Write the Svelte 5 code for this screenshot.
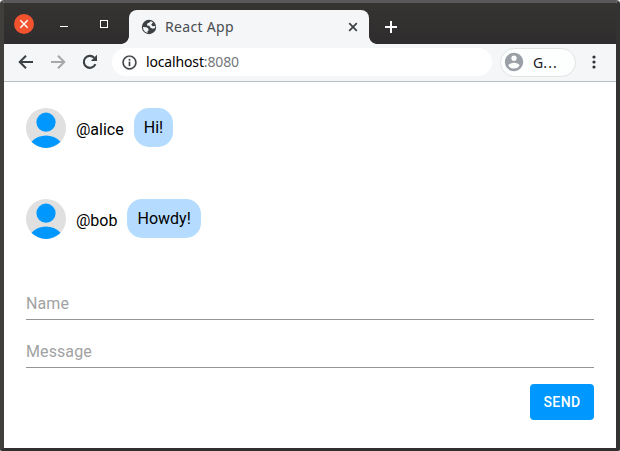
<script>
  const messages = [
    { name: '@alice', text: 'Hi!' },
    { name: '@bob', text: 'Howdy!' }
  ];
  let name = $state('');
  let message = $state('');
</script>

<div class="window">
  <div class="tabstrip">
    <button class="close" aria-label="Close window">
      <svg width="20" height="20" viewBox="0 0 20 20"><path d="M6.3 6.3l7.4 7.4M13.7 6.3l-7.4 7.4" stroke="#fff" stroke-width="1.4" /></svg>
    </button>
    <span class="minimize"></span>
    <span class="maximize"></span>
    <div class="tab">
      <svg class="globe" width="18" height="18" viewBox="0 0 18 18"><circle cx="9" cy="9" r="7.2" fill="#3c4043" /><path d="M10.9 3.2L8.900 4.700 7.300 5.500 6.900 7.500 9.300 7.700 10.500 9.800 12.800 10.700 15 9.900 15.400 7.900 12.600 8.200 11.200 6.700 12.300 5.300 13 4.200zM3 9L6.500 9.300 8.500 10.800 8.400 12.700 7.300 13.400 7.700 15 5 13.700 3.300 11.500z" fill="#f4f6f8" /></svg>
      <span class="title">React App</span>
      <svg class="tabclose" width="10" height="10" viewBox="0 0 10 10"><path d="M1.2 1.2l7.6 7.6M8.8 1.2L1.2 8.8" stroke="#3c4043" stroke-width="1.7" /></svg>
    </div>
    <svg class="plus" width="14" height="14" viewBox="0 0 14 14"><path d="M7 1v12M1 7h12" stroke="#fff" stroke-width="2" /></svg>
  </div>

  <div class="toolbar">
    <svg width="20" height="20" viewBox="0 0 20 20" fill="none" stroke="#3c4043" stroke-width="2"><path d="M17 10H4.500M10 3.700L3.700 10l6.300 6.300" /></svg>
    <svg width="20" height="20" viewBox="0 0 20 20" fill="none" stroke="#a6a7a8" stroke-width="2"><path d="M3 10h12.500M10 3.700l6.300 6.300-6.300 6.300" /></svg>
    <svg width="20" height="20" viewBox="0 0 20 20"><path d="M15.400 12.200A6 6 0 1 1 14.200 5.700" fill="none" stroke="#3c4043" stroke-width="2.100" /><path d="M17 2.800v6.200h-6.200z" fill="#3c4043" /></svg>
    <div class="address">
      <svg width="17" height="17" viewBox="0 0 24 24" fill="#3c4043"><path d="M11 17h2v-6h-2v6zm1-15C6.480 2 2 6.480 2 12s4.480 10 10 10 10-4.480 10-10S17.520 2 12 2zm0 18c-4.410 0-8-3.590-8-8s3.590-8 8-8 8 3.590 8 8-3.590 8-8 8zM11 9h2V7h-2v2z" stroke="#3c4043" stroke-width=".3" /></svg>
      <span class="url">localhost<span class="port">:8080</span></span>
    </div>
    <div class="profile">
      <svg width="22" height="22" viewBox="0 0 24 24" fill="#9aa0a6"><path d="M12 2C6.480 2 2 6.480 2 12s4.480 10 10 10 10-4.480 10-10S17.520 2 12 2zm0 3c1.660 0 3 1.340 3 3s-1.340 3-3 3-3-1.340-3-3 1.340-3 3-3zm0 14.200a7.200 7.200 0 0 1-6-3.220c.03-1.990 4-3.080 6-3.080 1.990 0 5.970 1.090 6 3.080a7.200 7.200 0 0 1-6 3.220z" /></svg>
      <span class="label">G<span class="dots">...</span></span>
    </div>
    <svg class="menu" width="4" height="14" viewBox="0 0 4 14" fill="#303336"><circle cx="2" cy="2" r="1.600" /><circle cx="2" cy="7" r="1.600" /><circle cx="2" cy="12" r="1.600" /></svg>
  </div>

  <main>
    {#each messages as item}
      <div class="row">
        <svg class="avatar" width="40" height="40" viewBox="0 0 40 40"><circle cx="20" cy="20" r="20" fill="#e0e0e0" /><circle cx="20" cy="14.200" r="9.600" fill="#0098ff" /><path d="M5.500 33.700A20 20 0 0 1 34.500 33.700A20 20 0 0 1 5.500 33.700z" transform="translate(0 0)" fill="#0098ff" /></svg>
        <span class="author">{item.name}</span>
        <span class="bubble">{item.text}</span>
      </div>
    {/each}
    <form onsubmit={(e) => e.preventDefault()}>
      <input placeholder="Name" bind:value={name} />
      <input placeholder="Message" bind:value={message} />
      <button class="send">SEND</button>
    </form>
  </main>
</div>

<style>
  :global(body) { margin: 0; background: #fff; }
  .window {
    box-sizing: border-box; width: 620px; height: 451px; overflow: hidden;
    border-style: solid; border-width: 3px 4px 3px 4px;
    border-color: #5a5959 #343333 #302e2f #413f3c;
    border-radius: 4px 4px 2px 2px; background: #fff;
    display: flex; flex-direction: column;
  }
  svg { display: block; flex: none; }
  .tabstrip {
    height: 41px; flex: none; display: flex; align-items: center;
    background: linear-gradient(#363431, #2f2c2e);
    font-family: "Noto Sans", sans-serif;
  }
  .close {
    width: 20px; height: 20px; padding: 0; border: 0; border-radius: 50%;
    background: #f2532f; margin-left: 10px; flex: none;
  }
  .minimize { width: 8px; height: 1px; background: #fff; margin: 5px 0 0 26px; }
  .maximize { box-sizing: border-box; width: 8px; height: 8px; border: 1px solid #fff; margin-left: 32px; }
  .tab {
    position: relative; box-sizing: border-box; width: 240px; height: 34px; margin-left: 21px; align-self: flex-end;
    display: flex; align-items: center; padding: 0 11px;
    background: #f4f6f8; border-radius: 8px 8px 0 0;
  }
  .tab::before, .tab::after { content: ""; position: absolute; bottom: 0; width: 8px; height: 8px; }
  .tab::before { left: -8px; background: radial-gradient(circle at 0 0, transparent 7.5px, #f4f6f8 8.2px); }
  .tab::after { right: -8px; background: radial-gradient(circle at 100% 0, transparent 7.5px, #f4f6f8 8.2px); }
  .title { font-size: 14px; line-height: 20px; margin-left: 7px; color: #494c50; letter-spacing: .32px; }
  .tabclose { margin-left: auto; }
  .plus { margin: 7px 0 0 15px; }
  .toolbar {
    box-sizing: border-box; height: 38px; flex: none; display: flex; align-items: center;
    padding: 0 0 1px 12px; background: #f4f6f8; border-bottom: 1px solid #b7bec5;
    font-family: "Noto Sans", sans-serif;
  }
  .toolbar > svg + svg { margin-left: 12px; }
  .address {
    box-sizing: border-box; width: 380px; height: 28px; margin-left: 12px; padding-left: 9px;
    border-radius: 14px; background: #fff; display: flex; align-items: center;
  }
  .url { margin-left: 8px; font-size: 14px; line-height: 20px; color: #000; letter-spacing: -.15px; }
  .port { color: #74777a; }
  .profile {
    box-sizing: border-box; width: 76px; height: 29px; margin-left: 8px; padding-left: 2px;
    border: 1px solid #e0e3e2; border-radius: 15px; background: #fdfefe;
    display: flex; align-items: center; font-size: 14px; line-height: 20px; color: #202124;
  }
  .label { margin: 1px 0 0 8px; }
  .dots { letter-spacing: 1.2px; }
  .menu { margin-left: 16px; }
  main { flex: 1; padding: 26px 22px 0; font-family: Roboto, sans-serif; font-size: 16px; color: #000; }
  .row { height: 40px; margin-bottom: 51px; display: flex; align-items: flex-start; }
  .author { margin: 12px 10px 0; line-height: 20px; }
  .bubble { height: 39px; box-sizing: border-box; padding: 10px; line-height: 19px; background: #b5dcff; border-radius: 15px; }
  form { display: flex; flex-direction: column; margin-top: -2px; }
  input {
    box-sizing: border-box; width: 100%; height: 32px; padding: 0; margin: 0 0 16px;
    border: 0; border-bottom: 1px solid #949494; border-radius: 0; background: transparent;
    font: 16px/19px Roboto, sans-serif; letter-spacing: .1px; outline: 0;
  }
  input::placeholder { color: #a2a2a2; opacity: 1; }
  .send {
    align-self: flex-end; width: 64px; height: 36px; padding: 0; border: 0; border-radius: 4px;
    background: #0098ff; color: #fff; font: 500 14px/20px Roboto, sans-serif; letter-spacing: .4px;
  }
</style>
